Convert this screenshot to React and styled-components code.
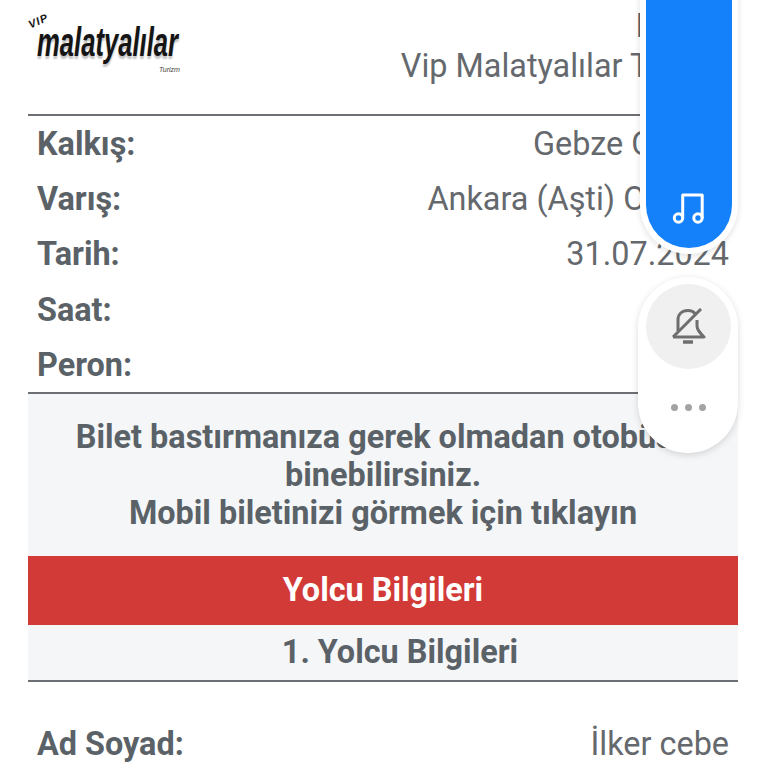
import React from "react";
import styled, { createGlobalStyle } from "styled-components";

const Global = createGlobalStyle`
  html, body { margin: 0; padding: 0; background: #fff; height: 768px; overflow: hidden; }
  body { font-family: Roboto, "Liberation Sans", sans-serif; color: #5a6268; }
`;
const Page = styled.div`
  position: relative;
  width: 768px;
  height: 768px;
  overflow: hidden;
  box-sizing: border-box;
  padding: 0 30px 0 28px;
`;
const Header = styled.header`
  display: flex;
  justify-content: space-between;
  height: 114px;
  border-bottom: 2px solid #6c6f73;
`;
const Logo = styled.div`
  position: relative;
  width: 170px;
  padding-top: 15px;
  color: #151515;
`;
const LogoVip = styled.div`
  font: italic 700 11px/11px "Liberation Sans", sans-serif;
  letter-spacing: 1px;
  width: 24px;
  transform: rotate(-24deg);
`;
const LogoName = styled.div`
  font: italic 700 41px/36px "Liberation Sans", sans-serif;
  margin: -2px 0 0 9px;
  transform: scaleX(0.625);
  transform-origin: left center;
  white-space: nowrap;
  text-shadow: 0 3px 2px #c4c4c4;
`;
const LogoSub = styled.div`
  font: italic 400 7px/7px "Liberation Sans", sans-serif;
  margin: 6px 0 0 131px;
  color: #444;
`;
const Company = styled.div`
  flex: 1;
  text-align: right;
  font-size: 32.4px;
  line-height: 40px;
  padding: 6px 9px 0 0;
  color: #65696d;
  white-space: nowrap;
`;
const CompanyLabel = styled.div`
  font-weight: 700;
  color: #5a6268;
`;
const Row = styled.div`
  display: flex;
  justify-content: space-between;
  align-items: center;
  height: 55.2px;
  padding: 0 9px;
  font-size: 32.4px;
`;
const Label = styled.span`
  font-weight: 700;
  color: #5a6268;
`;
const Value = styled.span`
  color: #65696d;
  white-space: nowrap;
`;
const Details = styled.section`
  border-bottom: 2px solid #6c6f73;
  padding-top: 0.5px;
`;
const Notice = styled.div`
  background: #f4f6f8;
  height: 161.5px;
  box-sizing: border-box;
  padding-top: 24px;
  text-align: center;
  font-size: 32.4px;
  font-weight: 700;
  line-height: 38px;
  color: #5a6268;
`;
const RedBar = styled.div`
  background: #d23a38;
  color: #fff;
  height: 69px;
  display: flex;
  align-items: center;
  justify-content: center;
  font-size: 32.4px;
  font-weight: 700;
`;
const SubBar = styled.div`
  background: #f4f6f8;
  height: 55px;
  border-bottom: 2px solid #6c6f73;
  padding-left: 34px;
  display: flex;
  align-items: center;
  justify-content: center;
  font-size: 32.4px;
  font-weight: 700;
  color: #5a6268;
`;
const Spacer = styled.div`
  height: 34px;
`;
const MusicPill = styled.div`
  position: absolute;
  left: 640px;
  top: -60px;
  width: 86px;
  height: 285px;
  background: #1481fb;
  border: 6px solid #fff;
  border-top: 0;
  border-radius: 0 0 49px 49px;
  box-shadow: 0 2px 6px rgba(0,0,0,.12);
  display: flex;
  align-items: flex-end;
  justify-content: center;
  padding-bottom: 23px;
`;
const ControlPill = styled.div`
  position: absolute;
  left: 638px;
  top: 277px;
  width: 100px;
  height: 176px;
  background: #fff;
  border-radius: 50px;
  box-shadow: 0 2px 7px rgba(0,0,0,.14);
  display: flex;
  flex-direction: column;
  align-items: center;
  padding-top: 7px;
  box-sizing: border-box;
`;
const BellCircle = styled.div`
  width: 85px;
  height: 85px;
  border-radius: 50%;
  background: #f0f0f0;
  display: flex;
  align-items: center;
  justify-content: center;
`;
const Dots = styled.div`
  display: flex;
  gap: 7px;
  margin-top: 35px;
`;
const Dot = styled.span`
  width: 7px;
  height: 7px;
  border-radius: 50%;
  background: #a3a3a3;
`;

const rows = [
  ["Kalkış:", "Gebze Otogar"],
  ["Varış:", "Ankara (Aşti) Otogarı"],
  ["Tarih:", "31.07.2024"],
  ["Saat:", "21:00"],
  ["Peron:", "1"],
];

export default function App() {
  return (
    <Page>
      <Global />
      <Header>
        <Logo>
          <LogoVip>VIP</LogoVip>
          <LogoName>malatyalılar</LogoName>
          <LogoSub>Turizm</LogoSub>
        </Logo>
        <Company>
          <CompanyLabel>Firma:</CompanyLabel>
          <div>Vip Malatyalılar Turizm</div>
        </Company>
      </Header>
      <Details>
        {rows.map(([l, v]) => (
          <Row key={l}><Label>{l}</Label><Value>{v}</Value></Row>
        ))}
      </Details>
      <Notice>
        Bilet bastırmanıza gerek olmadan otobüse<br />
        binebilirsiniz.<br />
        Mobil biletinizi görmek için tıklayın
      </Notice>
      <RedBar>Yolcu Bilgileri</RedBar>
      <SubBar>1. Yolcu Bilgileri</SubBar>
      <Spacer />
      <Row><Label>Ad Soyad:</Label><Value>İlker cebe</Value></Row>
      <MusicPill>
        <svg width="34" height="34" viewBox="0 0 34 34" fill="none" stroke="#fff" strokeWidth="3" strokeLinejoin="round">
          <circle cx="6.5" cy="27" r="4.2" />
          <circle cx="26" cy="27" r="4.2" />
          <path d="M10.7 27V4h19.5v23" />
        </svg>
      </MusicPill>
      <ControlPill>
        <BellCircle>
          <svg width="36" height="38" viewBox="0 0 36 38" fill="none" stroke="#6e6e6e" strokeWidth="3" strokeLinejoin="round">
            <path d="M8 23V12C8 6 12 2.500 18 2.500c3 0 5.500 1 7 3" />
            <path d="M27 12v6c0 4 3 7 7 11H3" />
            <path d="M31 1 3 29" />
            <path d="M13 34h10" strokeWidth="3.500" />
          </svg>
        </BellCircle>
        <Dots><Dot /><Dot /><Dot /></Dots>
      </ControlPill>
    </Page>
  );
}
